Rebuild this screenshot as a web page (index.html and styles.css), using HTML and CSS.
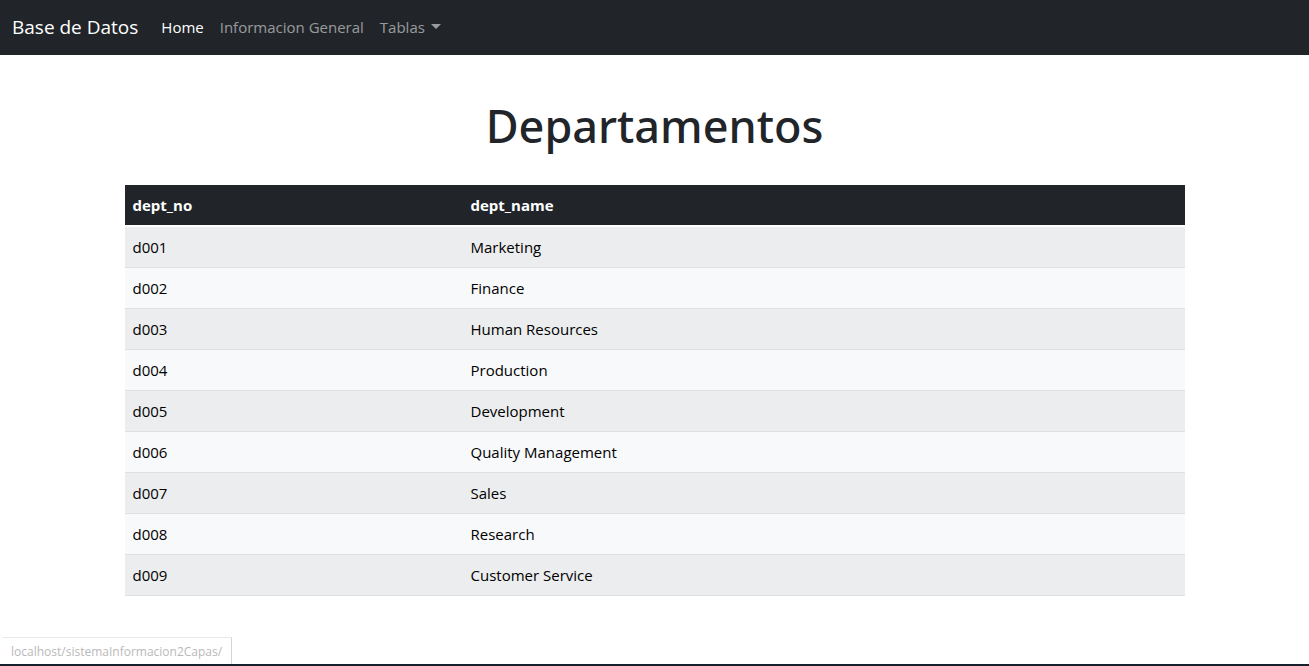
FILE: index.html
```html
<!DOCTYPE html>
<html lang="es">
<head>
<meta charset="utf-8">
<meta name="viewport" content="width=device-width, initial-scale=1">
<title>Base de Datos</title>
<link rel="stylesheet" href="styles.css">
</head>
<body>
<nav class="navbar">
  <a class="brand" href="#">Base de Datos</a>
  <ul class="nav-list">
    <li><a class="nav-link active" href="#">Home</a></li>
    <li><a class="nav-link" href="#">Informacion General</a></li>
    <li><button class="nav-link dropdown" type="button" aria-haspopup="true">Tablas</button></li>
  </ul>
</nav>
<main class="container">
  <h1 class="title">Departamentos</h1>
  <table class="table">
    <thead>
      <tr><th class="col-no" scope="col">dept_no</th><th scope="col">dept_name</th></tr>
    </thead>
    <tbody>
      <tr><td>d001</td><td>Marketing</td></tr>
      <tr><td>d002</td><td>Finance</td></tr>
      <tr><td>d003</td><td>Human Resources</td></tr>
      <tr><td>d004</td><td>Production</td></tr>
      <tr><td>d005</td><td>Development</td></tr>
      <tr><td>d006</td><td>Quality Management</td></tr>
      <tr><td>d007</td><td>Sales</td></tr>
      <tr><td>d008</td><td>Research</td></tr>
      <tr><td>d009</td><td>Customer Service</td></tr>
    </tbody>
  </table>
</main>
<footer class="status">
  <span class="status-url">localhost/sistemaInformacion2Capas/</span>
</footer>
</body>
</html>
```
FILE: styles.css
```css
* {
  box-sizing: border-box;
}

body {
  display: flex;
  flex-direction: column;
  min-height: 100vh;
  margin: 0;
  background: #fff;
  color: #212529;
  font-family: "Segoe UI", "Open Sans", "Noto Sans", sans-serif;
  font-size: 15px;
  line-height: 24px;
}

.navbar {
  display: flex;
  align-items: center;
  gap: 15px;
  padding: 7px 12px 8px;
  background: #212529;
}

.brand {
  color: #fff;
  font-size: 19px;
  line-height: 30px;
  text-decoration: none;
}

.nav-list {
  display: flex;
  margin: 0;
  padding: 0;
  list-style: none;
}

.nav-link {
  display: block;
  padding: 8px;
  border: 0;
  background: none;
  color: rgba(255, 255, 255, 0.55);
  font: inherit;
  text-decoration: none;
}

.nav-link.active {
  color: #fff;
}

.dropdown {
  display: flex;
  align-items: center;
  gap: 6px;
}

.dropdown::after {
  content: "";
  margin-bottom: 2px;
  border: 5px solid transparent;
  border-top-color: currentColor;
  border-bottom: 0;
}

.container {
  width: 100%;
  max-width: 1092px;
  margin: 0 auto;
  padding: 42px 16px 32px;
}

.title {
  margin: 0 0 30px;
  font-family: "Segoe UI", "Noto Sans", "Open Sans", sans-serif;
  font-size: 45px;
  font-weight: 500;
  line-height: 58px;
  text-align: center;
}

.table {
  width: 100%;
  border-collapse: separate;
  border-spacing: 0;
  color: #000;
}

.table th,
.table td {
  padding: 8px;
  text-align: left;
}

.table th {
  background: #212529;
  border-bottom: 2px solid #fff;
  color: #fff;
  font-weight: 700;
}

.table td {
  background: #f8f9fa;
  border-bottom: 1px solid #dfe0e1;
}

.table tbody tr:nth-child(odd) td {
  background: #ecedee;
}

.table .col-no {
  width: 338px;
}

.status {
  display: flex;
  margin-top: auto;
  border-bottom: 2px solid #17202a;
}

.status-url {
  margin-left: 3px;
  padding: 2px 9px 0 8px;
  border-top: 1px solid #e8e8e8;
  border-right: 1px solid #d5d5d5;
  color: #b9b9b9;
  font-size: 12px;
}
```
